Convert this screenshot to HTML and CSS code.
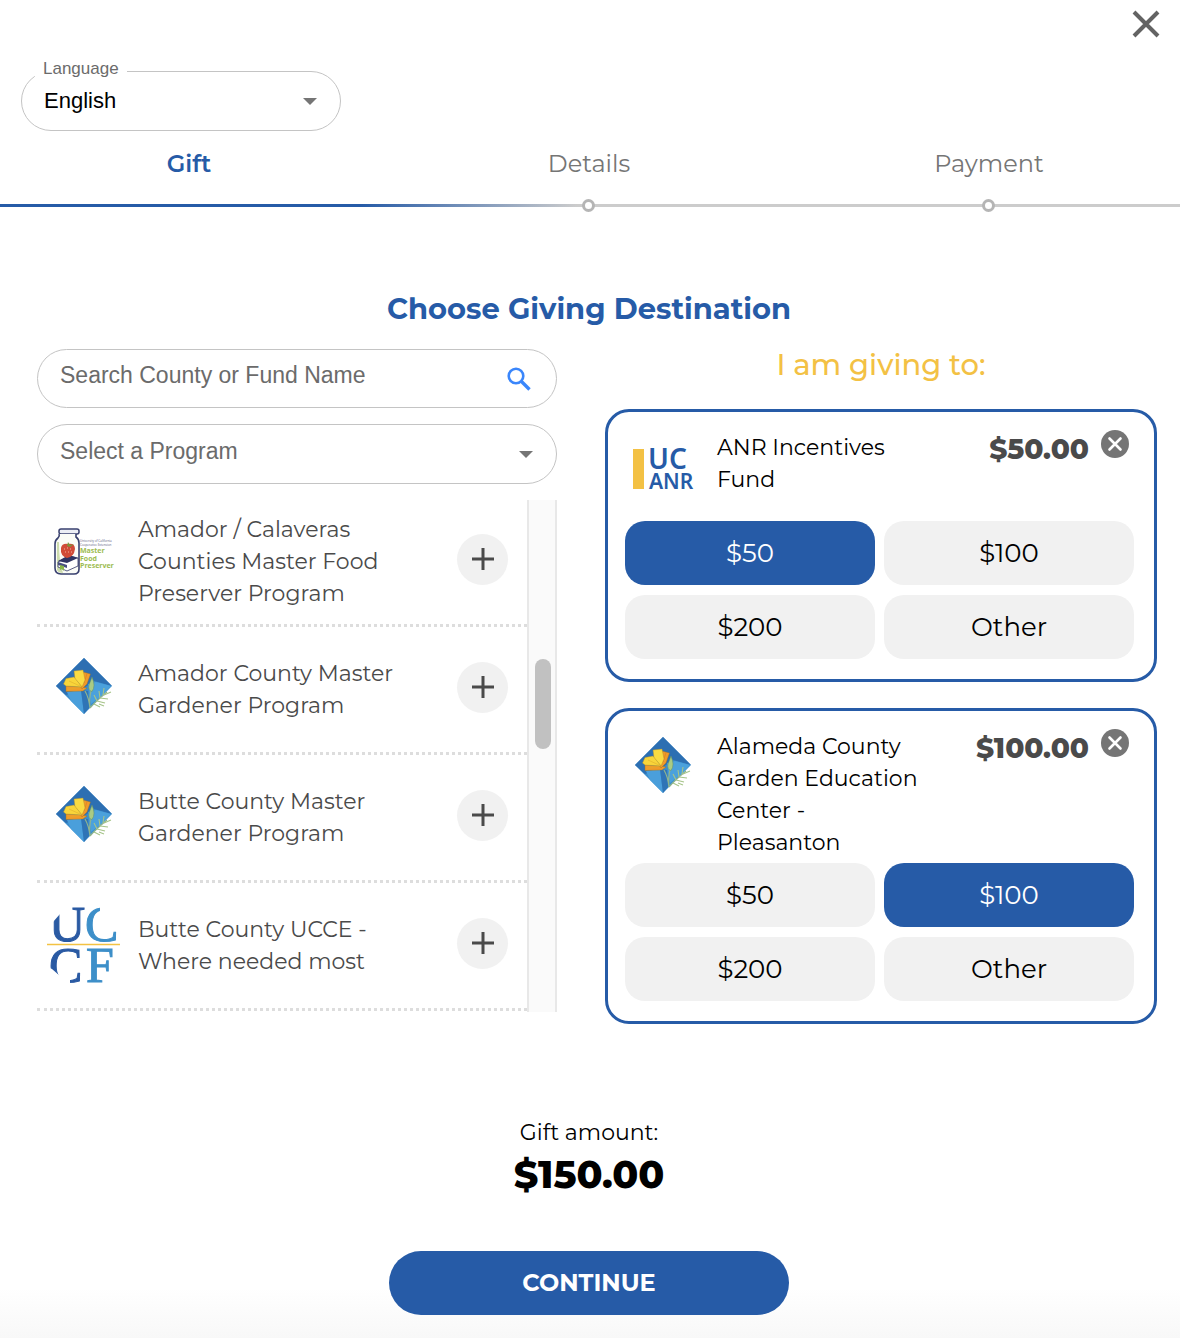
FILE: index.html
```html
<!DOCTYPE html>
<html lang="en">
<head>
<meta charset="utf-8">
<meta name="viewport" content="width=device-width, initial-scale=1">
<title>Choose Giving Destination</title>
<link rel="stylesheet" href="styles.css">
</head>
<body>
<svg class="sprite" aria-hidden="true">
  <symbol id="poppy" viewBox="0 0 60 60">
    <path d="M30 2 58 30 30 58 2 30Z" fill="#3b8dcd"/>
    <path d="M30 2 58 30 40 25 30 32 12 39 2 30Z" fill="#2d6fb2"/>
    <path d="M13 36 27 34 30 58 17 45Z" fill="#4a9fdb"/>
    <path d="M27 34 34 35 35 52 30 58Z" fill="#2f74b6"/>
    <path d="M34 28 42 26 57 30 50 38 37 48Z" fill="#4ba1dc"/>
    <path d="M12 30 27 31 33 32 29 35 12 35.500Z" fill="#f09a2a" stroke="#9a7326" stroke-width=".4"/>
    <path d="M29 16 36.500 18 33 28 28 33 26 30Z" fill="#f0992a" stroke="#9a6d20" stroke-width=".4"/>
    <path d="M33 17.500 30 27" stroke="#d67d1f" stroke-width=".6"/>
    <path d="M20 15 29 14 31 24 28 31 21 23Z" fill="#fadb42" stroke="#b08c2c" stroke-width=".4"/>
    <path d="M9.500 28 12 22.500 20 21 28 31 12 30Z" fill="#f8d53a" stroke="#b08c2c" stroke-width=".4"/>
    <path d="M27 31 14 33.500M15 25 26 30" stroke="#dfae2b" stroke-width=".6"/>
    <path d="M31 35Q35 42 36 52M37 35Q35 42 36 52M36 52Q41 46 53 36" fill="none" stroke="#8fb48e" stroke-width="1.200"/>
    <path d="M38 21Q42 30 38 35.500 34 35 35 29Z" fill="#a9cb84" stroke="#5f8f66" stroke-width=".5"/>
    <path d="M43 45 40 39M43 45 51 47M46 42 45 35M46 42 54 43M49 39 50 32M50 39 57 36M40 48 46 51M45 48 50 50" fill="none" stroke="#a6c489" stroke-width="1.100"/>
  </symbol>
  <symbol id="plus" viewBox="0 0 24 24"><path d="M12 1V23M1 12H23" stroke="#4a4a4a" stroke-width="3"/></symbol>
  <symbol id="remove" viewBox="0 0 28 28">
    <circle cx="14" cy="14" r="14" fill="#757575"/>
    <path d="M8.500 8.500 19.500 19.500M19.500 8.500 8.500 19.500" stroke="#fff" stroke-width="2.600" stroke-linecap="round"/>
  </symbol>
</svg>

<main class="page">
  <header class="topbar">
    <button class="close" type="button" aria-label="Close">
      <svg viewBox="0 0 32 32" width="32" height="32"><path d="M4 4 28 28M28 4 4 28" stroke="#636363" stroke-width="4"/></svg>
    </button>
  </header>

  <div class="field language">
    <label class="float-label" for="language">Language</label>
    <select id="language" class="control"><option>English</option></select>
    <span class="caret"></span>
  </div>

  <nav aria-label="Progress">
    <ol class="steps">
      <li class="step current" aria-current="step">Gift</li>
      <li class="step"><span>Details</span><i class="dot"></i></li>
      <li class="step"><span>Payment</span><i class="dot"></i></li>
    </ol>
  </nav>

  <h1 class="title">Choose Giving Destination</h1>

  <div class="columns">
    <section class="finder">
      <div class="field search-field">
        <input class="control" type="text" aria-label="Search" placeholder="Search County or Fund Name">
        <svg class="search" viewBox="0 0 24 24" width="24" height="24"><circle cx="9" cy="9" r="7.300" fill="none" stroke="#3a86fb" stroke-width="2.600"/><path d="M14.500 14.500 22.500 22.500" stroke="#3a86fb" stroke-width="3.400"/></svg>
      </div>
      <div class="field">
        <select class="control muted" aria-label="Program"><option>Select a Program</option></select>
        <span class="caret"></span>
      </div>
      <div class="results">
        <ul class="funds">
          <li class="fund">
            <svg class="logo" viewBox="0 0 60 60" width="60" height="60">
              <rect x="5" y="1" width="20" height="5" rx="2" fill="#eceef5" stroke="#39406f" stroke-width="1.500"/>
              <path d="M5 6Q6 8 4 10 1 12 1 16V40Q1 46 7 46H20Q25 46 25 41V15Q25 11 22 9V6" fill="#fbfcf7" stroke="#39406f" stroke-width="1.600"/>
              <path d="M3 14V42Q4 45 9 45 5 35 5 14Z" fill="#cddcae"/>
              <path d="M4 34 15 28 24 30 24 38 13 43 4 39Z" fill="#fff" stroke="#303564" stroke-width=".8"/>
              <path d="M4 33 15 27 24 30 13 35Z" fill="#303564"/>
              <path d="M4 34 13 37V40L4 37Z" fill="#4a5080"/>
              <path d="M6 37 10 38V43L8 41 6 42Z" fill="#8ab648"/>
              <path d="M7 20Q8 15 14 16 21 15 21 21 20 29 13 30 6 28 7 20Z" fill="#d14b38"/>
              <path d="M10 17 13 18 14 14 16 17 20 16 16 19" fill="#78963c"/>
              <path d="M10 21h1M13 20h1M16 21h1M11 24h1M14 24h1M17 24h1" stroke="#f3b29c"/>
              <text x="26" y="14" class="tiny">University of California</text>
              <text x="26" y="18" class="tiny">Cooperative Extension</text>
              <text x="26" y="25" class="mfp">Master</text>
              <text x="26" y="33" class="mfp">Food</text>
              <text x="26" y="40" class="mfp">Preserver</text>
            </svg>
            <span class="fund-name">Amador / Calaveras Counties Master Food Preserver Program</span>
            <button class="add" type="button" aria-label="Add Amador / Calaveras Counties Master Food Preserver Program"><svg width="24" height="24"><use href="#plus"/></svg></button>
          </li>
          <li class="fund">
            <svg class="logo" width="60" height="60"><use href="#poppy"/></svg>
            <span class="fund-name">Amador County Master Gardener Program</span>
            <button class="add" type="button" aria-label="Add Amador County Master Gardener Program"><svg width="24" height="24"><use href="#plus"/></svg></button>
          </li>
          <li class="fund">
            <svg class="logo" width="60" height="60"><use href="#poppy"/></svg>
            <span class="fund-name">Butte County Master Gardener Program</span>
            <button class="add" type="button" aria-label="Add Butte County Master Gardener Program"><svg width="24" height="24"><use href="#plus"/></svg></button>
          </li>
          <li class="fund">
            <svg class="logo" viewBox="0 -4 74 80" width="74" height="80">
              <g class="uccf">
                <text x="2" y="35" fill="#2a5aa3" stroke="#2a5aa3">U</text>
                <text x="38" y="35" fill="#3d8fc9" stroke="#3d8fc9">C</text>
                <text x="2" y="76" fill="#2a5aa3" stroke="#2a5aa3">C</text>
                <text x="39" y="76" fill="#3d8fc9" stroke="#3d8fc9">F</text>
              </g>
              <path d="M0 -2H20V5L13 5V8L6 16H0ZM53 -2H74V23H60L53 9ZM0 61 5 63 13 70 21 71 23 74V79H0Z" fill="#fff"/>
              <path d="M0 38.500H73" stroke="#f3c243" stroke-width="1.500"/>
            </svg>
            <span class="fund-name">Butte County UCCE - Where needed most</span>
            <button class="add" type="button" aria-label="Add Butte County UCCE - Where needed most"><svg width="24" height="24"><use href="#plus"/></svg></button>
          </li>
        </ul>
        <div class="scroll-track"><div class="scroll-thumb"></div></div>
      </div>
    </section>

    <section class="basket">
      <h2 class="basket-title">I am giving to:</h2>
      <article class="card">
        <div class="card-head">
          <svg class="logo" viewBox="0 0 60 60" width="60" height="60">
            <path d="M0 13H11V53H0Z" fill="#f3c144"/>
            <g class="anr"><text x="15" y="33" font-size="28">UC</text><text x="16" y="53" font-size="21">ANR</text></g>
          </svg>
          <h3 class="card-name">ANR Incentives Fund</h3>
          <strong class="amount">$50.00</strong>
          <button class="remove" type="button" aria-label="Remove ANR Incentives Fund"><svg width="28" height="28"><use href="#remove"/></svg></button>
        </div>
        <div class="choices">
          <button class="choice selected" type="button" aria-pressed="true">$50</button>
          <button class="choice" type="button" aria-pressed="false">$100</button>
          <button class="choice" type="button" aria-pressed="false">$200</button>
          <button class="choice" type="button" aria-pressed="false">Other</button>
        </div>
      </article>
      <article class="card">
        <div class="card-head">
          <svg class="logo" width="60" height="60"><use href="#poppy"/></svg>
          <h3 class="card-name">Alameda County Garden Education Center - Pleasanton</h3>
          <strong class="amount">$100.00</strong>
          <button class="remove" type="button" aria-label="Remove Alameda County Garden Education Center"><svg width="28" height="28"><use href="#remove"/></svg></button>
        </div>
        <div class="choices">
          <button class="choice" type="button" aria-pressed="false">$50</button>
          <button class="choice selected" type="button" aria-pressed="true">$100</button>
          <button class="choice" type="button" aria-pressed="false">$200</button>
          <button class="choice" type="button" aria-pressed="false">Other</button>
        </div>
      </article>
    </section>
  </div>

  <footer class="summary">
    <span class="summary-label">Gift amount:</span>
    <strong class="total">$150.00</strong>
    <button class="continue" type="button">CONTINUE</button>
  </footer>
</main>
</body>
</html>
```

FILE: styles.css
```css
* { box-sizing: border-box; }

:root {
  --blue: #265ba7;
  --yellow: #f3c144;
  --body: 22px;
}

body {
  margin: 0;
  background: #fff;
  color: #000;
  font-family: Montserrat, Inter, sans-serif;
  font-size: var(--body);
  line-height: 32px;
}

button, input, select { font: inherit; color: inherit; }
button { border: 0; padding: 0; background: none; cursor: pointer; }
h1, h2, h3, ol, ul { margin: 0; padding: 0; font-weight: 400; }
svg { display: block; }
.sprite { display: none; }
.logo { overflow: visible; }

.page {
  overflow: hidden;
  background: linear-gradient(to top, #f8f8f8, #fff 50px);
}

.topbar {
  display: flex;
  justify-content: flex-end;
  height: 48px;
  padding: 8px 18px 0 0;
}
.close { width: 32px; height: 32px; }

.field { position: relative; height: 60px; }
.search-field { height: 59px; }
.control {
  width: 100%;
  height: 100%;
  padding: 0 60px 0 22px;
  border: 1px solid #c4c4c4;
  border-radius: 30px;
  background: #fff;
  font-family: "Liberation Sans", Arial, sans-serif;
  font-size: 22px;
  appearance: none;
}
.finder .control { padding-bottom: 6px; font-size: 23px; }
.muted, .control::placeholder { color: #6b6b6b; opacity: 1; }
.caret {
  position: absolute;
  right: 24px;
  top: 27px;
  border: 7px solid transparent;
  border-top-color: #757575;
  border-bottom: 0;
  pointer-events: none;
}
.search { position: absolute; right: 26px; top: 18px; }

.language { width: 320px; margin: 23px 0 0 21px; }
.float-label {
  position: absolute;
  left: 14px;
  top: -12px;
  padding: 0 8px;
  background: #fff;
  color: #6b6b6b;
  font: 17px/20px "Liberation Sans", Arial, sans-serif;
}

.steps {
  display: flex;
  margin: 0 -9px 0 -11px;
  padding-top: 17px;
  list-style: none;
  background: linear-gradient(90deg, var(--blue) 31%, #ccc 49%) bottom / 100% 3px no-repeat;
}
.step {
  position: relative;
  flex: 1;
  padding-bottom: 27px;
  color: #757575;
  font-size: 24px;
  text-align: center;
}
.step.current { color: var(--blue); font-weight: 600; }
.dot {
  position: absolute;
  left: calc(50% - 7px);
  bottom: -5px;
  width: 13px;
  height: 13px;
  border: 3px solid #b5b5b5;
  border-radius: 50%;
  background: #fff;
}

.title {
  margin: 84px 2px 22px 0;
  color: var(--blue);
  font-size: 29px;
  font-weight: 700;
  line-height: 36px;
  text-align: center;
}

.columns {
  display: grid;
  grid-template-columns: 520fr 552fr;
  align-items: start;
  gap: 48px;
  padding: 0 23px 0 37px;
}

.finder { display: grid; gap: 16px; }
.results { display: flex; height: 512px; overflow: hidden; }
.funds { flex: 1; margin-top: -1px; list-style: none; }
.fund {
  display: grid;
  grid-template-columns: 74px 1fr 51px;
  align-items: center;
  gap: 17px;
  height: 128px;
  padding: 0 19px 0 10px;
  border-bottom: 3px dotted #ddd;
  color: #4a4a4a;
}
.fund .logo { justify-self: center; margin-bottom: 8px; }
.fund-name { max-width: 280px; }
.add {
  display: grid;
  place-items: center;
  width: 51px;
  height: 51px;
  margin-bottom: 5px;
  border-radius: 50%;
  background: #f1f1f1;
}
.scroll-track {
  width: 30px;
  padding: 159px 4px 0 6px;
  border: solid #e8e8e8;
  border-width: 0 2px;
  background: #fafafa;
}
.scroll-thumb { width: 16px; height: 90px; border-radius: 8px; background: #c1c1c1; }

.tiny { font: 400 3px "Open Sans", sans-serif; fill: #59597c; }
.mfp { font: 700 7px "Open Sans", sans-serif; fill: #9cbc50; }
.uccf { font: 50px "Liberation Serif", serif; stroke-width: 1px; }
.anr { font-family: "Noto Sans", sans-serif; font-weight: 600; fill: var(--blue); }

.basket { display: grid; gap: 26px; }
.basket-title {
  margin-bottom: 2px;
  color: var(--yellow);
  font-size: 29px;
  font-weight: 500;
  text-align: center;
}
.card {
  padding: 18px 20px 20px 17px;
  border: 3px solid var(--blue);
  border-radius: 24px;
}
.card-head {
  display: grid;
  grid-template-columns: 60px minmax(0, 212px) 1fr 28px;
  align-items: start;
  min-height: 91px;
  padding: 0 5px 4px 8px;
}
.card-head .logo { margin-top: 6px; }
.card-name { margin: 2px -24px 0 24px; font-size: var(--body); }
.amount {
  padding-right: 12px;
  color: #4a4a4a;
  font-size: 28px;
  font-weight: 800;
  line-height: 38px;
  text-align: right;
}
.choices { display: grid; grid-template-columns: 1fr 1fr; gap: 10px 9px; }
.choice {
  height: 64px;
  border-radius: 20px;
  background: #f1f1f1;
  font-size: 26px;
}
.choice.selected { background: var(--blue); color: #fff; }

.summary {
  display: flex;
  flex-direction: column;
  align-items: center;
  padding: 93px 2px 23px 0;
}
.total { font-size: 38px; font-weight: 800; line-height: 52px; }
.continue {
  width: 400px;
  max-width: 90%;
  height: 64px;
  margin-top: 50px;
  border-radius: 32px;
  background: var(--blue);
  color: #fff;
  font-size: 24px;
  font-weight: 700;
}

@media (max-width: 860px) {
  .columns { grid-template-columns: 1fr; padding: 0 20px; }
}
```
